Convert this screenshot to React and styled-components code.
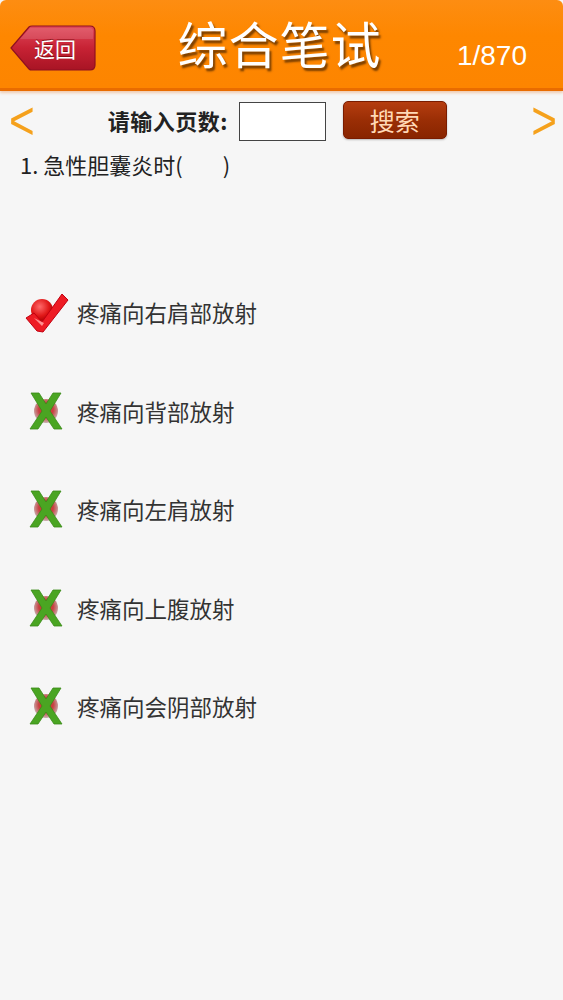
import React from 'react'
import styled, { createGlobalStyle } from 'styled-components'

const GlobalStyle = createGlobalStyle`
  html, body {
    margin: 0;
    padding: 0;
    background: #f6f6f6;
    font-family: "Liberation Sans", "Noto Sans CJK SC", sans-serif;
  }
`

const Page = styled.div`
  width: 563px;
  min-height: 1000px;
  background: #f6f6f6;
`

const Header = styled.div`
  height: 88px;
  background: linear-gradient(#fd8d12, #fe8700 40%, #fd8500);
  border-bottom: 3px solid #e96c00;
  box-shadow: 0 2px 3px rgba(230, 120, 40, 0.35);
  border-radius: 6px 6px 0 0;
  display: grid;
  grid-template-columns: 120px 1fr 120px;
  align-items: center;
`

const BackButton = styled.div`
  justify-self: start;
  margin-left: 10px;
  margin-top: 7px;
  position: relative;
  width: 86px;
  height: 46px;
`

const BackLabel = styled.span`
  position: absolute;
  left: 24px;
  top: 0;
  line-height: 46px;
  color: #fff;
  font-size: 21px;
  font-family: "Noto Sans CJK SC", sans-serif;
  text-shadow: 0 -1px 0 rgba(90, 0, 0, 0.6);
`

const Title = styled.h1`
  margin: -4px 0 0 -4px;
  text-align: center;
  color: #fff;
  font-size: 50px;
  font-weight: 400;
  letter-spacing: 1px;
  font-family: "Noto Sans CJK SC", sans-serif;
  text-shadow: 2px 3px 2px rgba(80, 40, 0, 0.75);
`

const PageCount = styled.div`
  justify-self: end;
  margin-right: 36px;
  margin-top: 24px;
  color: #fff;
  font-size: 28px;
  font-family: "Liberation Sans", sans-serif;
`

const Toolbar = styled.div`
  display: flex;
  align-items: center;
  height: 46px;
  margin-top: 6px;
  padding: 0 6px 0 9px;
`

const Arrow = styled.span`
  color: #f5a11c;
  font-size: 44px;
  line-height: 1;
  font-family: "Liberation Sans", sans-serif;
  transform: scaleY(1.2);
  margin-top: 2px;
`

const Center = styled.div`
  flex: 1;
  display: flex;
  align-items: center;
  padding-left: 73px;
`

const PromptLabel = styled.span`
  font-size: 22px;
  font-weight: 700;
  letter-spacing: 0.5px;
  color: #222;
  font-family: "Noto Sans CJK SC", sans-serif;
  margin-right: 11px;
`

const PageInput = styled.input`
  width: 87px;
  height: 39px;
  box-sizing: border-box;
  border: 1px solid #444;
  background: #fff;
  margin: 3px 0 0 0;
`

const SearchButton = styled.button`
  margin-left: 17px;
  width: 104px;
  height: 38px;
  border: 1px solid #7a1c00;
  border-radius: 5px;
  background: linear-gradient(#b53d10, #9a2e05 50%, #882500);
  color: #ffd9b6;
  font-size: 25px;
  font-family: "Noto Sans CJK SC", sans-serif;
  padding: 0;
  line-height: 36px;
  box-shadow: 0 1px 2px rgba(0, 0, 0, 0.25);
`

const Question = styled.div`
  margin: 6px 0 0 20px;
  font-size: 22px;
  color: #222;
  font-family: "Noto Sans CJK SC", sans-serif;
  line-height: 30px;
`

const Blank = styled.span`
  display: inline-block;
  width: 40px;
`

const OptionList = styled.div`
  margin-top: 84px;
  display: flex;
  flex-direction: column;
`

const OptionRow = styled.div`
  height: 98.5px;
  display: flex;
  align-items: center;
  padding-left: 25px;
`

const IconBox = styled.div`
  width: 44px;
  height: 42px;
  margin-right: 8px;
  display: flex;
  align-items: center;
  justify-content: center;
`

const OptionText = styled.span`
  font-size: 22.5px;
  color: #333;
  font-family: "Noto Sans CJK SC", sans-serif;
`

const BackShape = () => (
  <svg width="86" height="46" viewBox="0 0 86 46" style={{ position: 'absolute', left: 0, top: 0 }}>
    <defs>
      <linearGradient id="bk" x1="0" y1="0" x2="0" y2="1">
        <stop offset="0" stopColor="#e0485a" />
        <stop offset="0.5" stopColor="#c72234" />
        <stop offset="1" stopColor="#a81424" />
      </linearGradient>
    </defs>
    <path
      d="M1 23 L19 2 Q20 1 22 1 L80 1 Q85 1 85 6 L85 40 Q85 45 80 45 L22 45 Q20 45 19 44 Z"
      fill="url(#bk)"
      stroke="#8f1020"
      strokeWidth="1.2"
    />
    <path d="M20 3 L80 3 Q83 3 83 6 L83 14 L10 14 Z" fill="rgba(255,255,255,0.12)" />
  </svg>
)

const CheckIcon = () => (
  <svg width="44" height="42" viewBox="0 0 44 42">
    <defs>
      <radialGradient id="ball" cx="0.4" cy="0.35" r="0.7">
        <stop offset="0" stopColor="#ff6a6a" />
        <stop offset="0.6" stopColor="#e01818" />
        <stop offset="1" stopColor="#a80000" />
      </radialGradient>
    </defs>
    <circle cx="17" cy="19" r="11" fill="url(#ball)" />
    <path d="M1 27 L9 22 L17 31 L37 3 L43 9 L18 41 L12 40 Z" fill="#ee1c24" stroke="#c20010" strokeWidth="1" />
    <path d="M9 27 L17 35 L19 32 Z" fill="#ff9090" />
  </svg>
)

const WrongIcon = () => (
  <svg width="44" height="42" viewBox="0 0 44 42">
    <defs>
      <radialGradient id="gball" cx="0.5" cy="0.45" r="0.6">
        <stop offset="0" stopColor="#e03030" />
        <stop offset="0.5" stopColor="#c74040" />
        <stop offset="1" stopColor="#c8c8c8" />
      </radialGradient>
    </defs>
    <circle cx="21" cy="21" r="12" fill="url(#gball)" />
    <path
      d="M6 3 L14 3 L21 14 L28 3 L36 3 L25 21 L37 39 L29 39 L21 27 L13 39 L5 39 L17 21 Z"
      fill="#4aa522"
      stroke="#3a8a18"
      strokeWidth="0.8"
    />
  </svg>
)

const options = [
  { text: '疼痛向右肩部放射', correct: true },
  { text: '疼痛向背部放射', correct: false },
  { text: '疼痛向左肩放射', correct: false },
  { text: '疼痛向上腹放射', correct: false },
  { text: '疼痛向会阴部放射', correct: false },
]

const App = () => {
  return (
    <Page>
      <GlobalStyle />
      <Header>
        <BackButton>
          <BackShape />
          <BackLabel>返回</BackLabel>
        </BackButton>
        <Title>综合笔试</Title>
        <PageCount>1/870</PageCount>
      </Header>
      <Toolbar>
        <Arrow>&lt;</Arrow>
        <Center>
          <PromptLabel>请输入页数:</PromptLabel>
          <PageInput type="text" />
          <SearchButton>搜索</SearchButton>
        </Center>
        <Arrow>&gt;</Arrow>
      </Toolbar>
      <Question>
        1. 急性胆囊炎时(<Blank />)
      </Question>
      <OptionList>
        {options.map((o) => (
          <OptionRow key={o.text}>
            <IconBox>{o.correct ? <CheckIcon /> : <WrongIcon />}</IconBox>
            <OptionText>{o.text}</OptionText>
          </OptionRow>
        ))}
      </OptionList>
    </Page>
  )
}

export default App
